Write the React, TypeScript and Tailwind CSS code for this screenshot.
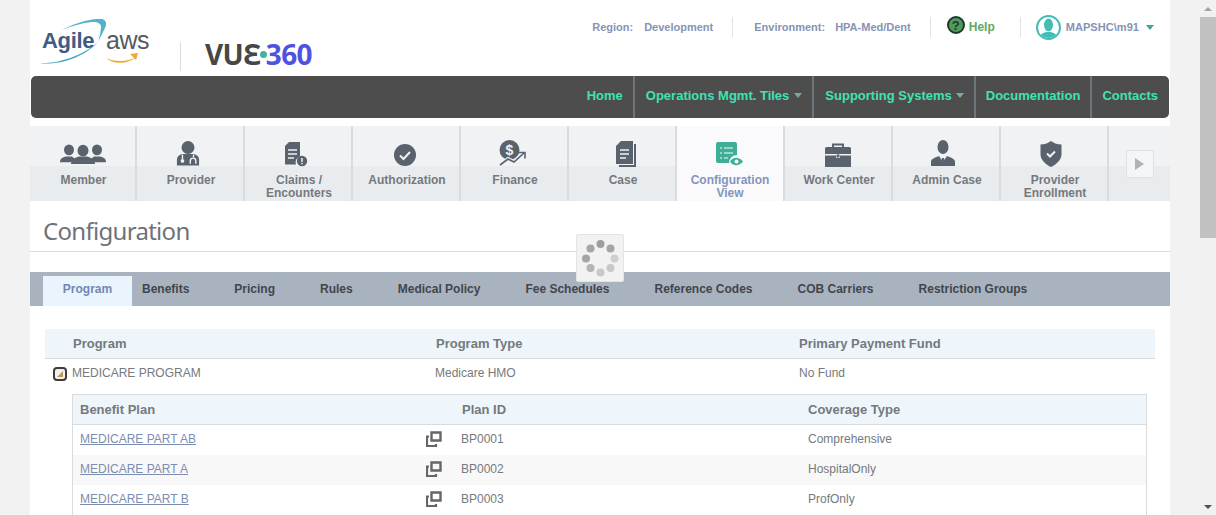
import type { ReactNode } from "react";

const gray = "#59626d";

const tiles: { label: string[]; icon: ReactNode; active?: boolean }[] = [
  {
    label: ["Member"],
    icon: (
      <svg className="mb-[3px] ml-[1px]" width="46" height="20" viewBox="0 0 46 24" preserveAspectRatio="none" fill={gray}>
        <ellipse cx="9" cy="7" rx="5" ry="6.5" />
        <path d="M0 22c0-5 3-6 6-7h6l3 3-4 4z" />
        <ellipse cx="37" cy="7" rx="5" ry="6.5" />
        <path d="M46 22c0-5-3-6-6-7h-6l-3 3 4 4z" />
        <ellipse cx="23" cy="8" rx="5.5" ry="7" />
        <path d="M11 24c0-5 4-8 8-9h8c4 1 8 4 8 9z" />
      </svg>
    ),
  },
  {
    label: ["Provider"],
    icon: (
      <svg className="mr-[4px]" width="24" height="27" viewBox="0 0 26 28" fill={gray}>
        <circle cx="13" cy="7.5" r="7" />
        <path d="M1 27v-6c0-4 3-6 6-6.5h12c3 .5 6 2.5 6 6.5v6z" />
        <path d="M7 15v5M19 15v3" stroke="#f0f2f4" strokeWidth="1.5" fill="none" />
        <circle cx="7" cy="22" r="2" fill="#f0f2f4" />
        <path d="M15.5 25v-3a3 3 0 0 1 6 0v3" stroke="#f0f2f4" strokeWidth="1.5" fill="none" />
      </svg>
    ),
  },
  {
    label: ["Claims /", "Encounters"],
    icon: (
      <svg className="mr-[4px]" width="24" height="26" viewBox="0 0 24 26" fill={gray}>
        <path d="M5 1h11v14.5a6 6 0 0 0-4 8H1V5z" />
        <path d="M4 9h9M4 13h9M4 17h6" stroke="#f0f2f4" strokeWidth="1.4" />
        <circle cx="18" cy="20" r="5.2" />
        <path d="M18 17v4M18 22v1.3" stroke="#f0f2f4" strokeWidth="1.5" />
      </svg>
    ),
  },
  {
    label: ["Authorization"],
    icon: (
      <svg className="mr-[2px] mb-[1px]" width="22" height="22" viewBox="0 0 22 22">
        <circle cx="11" cy="11" r="11" fill={gray} />
        <path d="M6 11.5l3.5 3.5L16 8" stroke="#f0f2f4" strokeWidth="2" fill="none" />
      </svg>
    ),
  },
  {
    label: ["Finance"],
    icon: (
      <svg className="mr-[2px]" width="28" height="27" viewBox="0 0 28 27" fill="none">
        <circle cx="10.500" cy="10" r="10" fill={gray} />
        <text x="10.500" y="15" textAnchor="middle" fontSize="14" fontWeight="700" fill="#f0f2f4" fontFamily="Liberation Sans">$</text>
        <path d="M1 25l8-6 6 3 10-9" stroke="#f0f2f4" strokeWidth="4" />
        <path d="M1 25l8-6 6 3 10-9" stroke={gray} strokeWidth="1.600" />
        <path d="M19 12.500h7v6" stroke={gray} strokeWidth="1.600" />
      </svg>
    ),
  },
  {
    label: ["Case"],
    icon: (
      <svg className="ml-[8px]" width="20" height="26" viewBox="0 0 20 26" fill={gray}>
        <path d="M5 0h12v23H0V5zM4 1v3H1z" />
        <path d="M18 3h2v23H3v-2h15z" />
        <path d="M4 9h9M4 13h9M4 17h6" stroke="#f0f2f4" strokeWidth="1.4" />
      </svg>
    ),
  },
  {
    label: ["Configuration", "View"],
    active: true,
    icon: (
      <svg width="28" height="26" viewBox="0 0 28 26" fill="#3fae97">
        <path d="M2 1h17a2 2 0 0 1 2 2v11a8 8 0 0 0-8 8H2a2 2 0 0 1-2-2V3a2 2 0 0 1 2-2z" />
        <path d="M4 7h2M8 7h9M4 12h2M8 12h9M4 17h2M8 17h4" stroke="#fbfbfe" strokeWidth="1.2" />
        <path d="M14 20.5c3-5 9-5 13 0-4 5-10 5-13 0z" />
        <circle cx="20.5" cy="20.5" r="2" fill="#fbfbfe" />
      </svg>
    ),
  },
  {
    label: ["Work Center"],
    icon: (
      <svg width="26" height="24" viewBox="0 0 26 24" fill={gray}>
        <path d="M8 5V1.500h10V5" stroke={gray} strokeWidth="2" fill="none" />
        <path d="M1.500 4h23A1.500 1.500 0 0 1 26 5.500V11H0V5.500A1.500 1.500 0 0 1 1.500 4z" />
        <path d="M0 12.500h11V15h4v-2.500h11V24H0z" />
        <path d="M11.500 11.500h3v3h-3z" />
      </svg>
    ),
  },
  {
    label: ["Admin Case"],
    icon: (
      <svg className="mr-[6px]" width="24" height="27" viewBox="0 0 24 27" fill={gray}>
        <ellipse cx="12" cy="7" rx="5.500" ry="7" />
        <path d="M0 26v-4c0-3 3-4 8-6l4 6 4-6c5 2 8 3 8 6v4z" />
        <path d="M11 18h2l.5 2-1.500 3-1.500-3z" />
      </svg>
    ),
  },
  {
    label: ["Provider", "Enrollment"],
    icon: (
      <svg className="mr-[6px]" width="22" height="26" viewBox="0 0 22 26" fill={gray}>
        <path d="M11 0c3 2.500 7 3.500 10.500 3.500V13c0 6-5 10.500-10.500 13C5.500 23.500.5 19 .5 13V3.500C4 3.500 8 2.500 11 0z" />
        <path d="M7 12.500l3 3 5-5" stroke="#f0f2f4" strokeWidth="2" fill="none" />
      </svg>
    ),
  },
];

const tabs = ["Benefits", "Pricing", "Rules", "Medical Policy", "Fee Schedules", "Reference Codes", "COB Carriers", "Restriction Groups"];

const plans = [
  { name: "MEDICARE PART AB", id: "BP0001", coverage: "Comprehensive" },
  { name: "MEDICARE PART A", id: "BP0002", coverage: "HospitalOnly" },
  { name: "MEDICARE PART B", id: "BP0003", coverage: "ProfOnly" },
];

function Caret({ className }: { className: string }) {
  return <span className={`inline-block h-0 w-0 border-x-[4px] border-t-[5px] border-x-transparent ${className}`} />;
}

function Logo() {
  return (
    <div className="flex h-[76px] w-[300px] items-start pl-[11px]">
      <div className="relative mt-[19px] h-[46px] w-[115px]">
        <svg className="absolute left-0 top-0" width="115" height="46" viewBox="0 0 115 46" fill="none">
          <path d="M21 11C33 4 52-1 61 0c5 1 5 6 2 11-2 4-4 8-6 12 2-6 3-13 3-15 0-3-2-5-9-5-10 1-21 4-30 8z" fill="#4fb3c9" />
          <path d="M-1 44c14 1 40-5 58-21-12 14-38 24-58 21z" fill="#3fa7c4" />
          <path d="M65 39c8 4 22 4 30-1-7 7-23 8-30 1z" fill="#f0a830" />
          <path d="M89 35l8-1-2 7z" fill="#f0a830" />
        </svg>
        <span className="absolute left-[1px] top-[9px] font-['Liberation_Sans'] text-[22px] leading-[26px] font-bold tracking-[-0.3px] text-[#3f5c85]">Agile</span>
        <span className="absolute left-[65px] top-[7px] font-['Liberation_Sans'] text-[25px] leading-[28px] tracking-[-0.5px] text-[#555a60]">aws</span>
      </div>
      <div className="mt-[42px] ml-[24px] h-[29px] w-px bg-[#dcdcdc]" />
      <div className="mt-[36px] ml-[24px] flex h-[36px] items-center font-['Noto_Sans'] text-[28px] font-bold tracking-[-0.6px] whitespace-nowrap">
        <span className="text-[#474747]">VUƐ</span>
        <span className="mx-[-1px] h-[7px] w-[7px] rounded-full bg-[#3fb5a0]" />
        <span className="text-[#4f52e0]">360</span>
      </div>
    </div>
  );
}

function TopInfo() {
  return (
    <div className="flex items-start pt-[17px] pr-[16px] font-['Liberation_Sans'] text-[11px] font-bold text-[#8594b4]">
      <div className="flex h-[20px] items-center border-r border-[#e2e2e2] pr-[19px]">
        <span>Region:</span>
        <span className="ml-[11px]">Development</span>
      </div>
      <div className="ml-[21px] flex h-[20px] items-center border-r border-[#e2e2e2] pr-[19px]">
        <span>Environment:</span>
        <span className="ml-[10px]">HPA-Med/Dent</span>
      </div>
      <div className="ml-[16px] flex h-[20px] items-center border-r border-[#e2e2e2] pr-[25px]">
        <span className="flex h-[18px] w-[18px] -translate-y-[2px] items-center justify-center rounded-full border-2 border-[#1f3a2c] bg-[#4f9a5c] text-[13px] leading-none text-[#1f3a2c]">?</span>
        <span className="ml-[4px] text-[12px] text-[#5fa85f]">Help</span>
      </div>
      <div className="ml-[15px] flex h-[20px] items-center">
        <span className="flex h-[25px] w-[25px] shrink-0 items-end justify-center overflow-hidden rounded-full border-2 border-[#45bcb4]">
          <svg width="17" height="20" viewBox="0 0 17 20" fill="#45bcb4">
            <ellipse cx="8.500" cy="7" rx="4.500" ry="6.500" />
            <path d="M0 20c0-4 3-5 6-6h5c3 1 6 2 6 6z" />
          </svg>
        </span>
        <span className="ml-[5px] tracking-[0.05px]">MAPSHC\m91</span>
        <Caret className="ml-[7px] border-t-[#45a592]" />
      </div>
    </div>
  );
}

function NavBar() {
  return (
    <div className="mx-px flex h-[42px] justify-end rounded-[5px] bg-[#4d4d4d] font-['Liberation_Sans'] text-[13px] font-bold text-[#3fe3b3]">
      <div className="flex items-center border-r-2 border-[#6c757b] pr-[10px] pb-[3px] pl-[11px]">Home</div>
      <div className="flex items-center border-r-2 border-[#6c757b] pr-[10px] pb-[3px] pl-[11px]">
        Operations Mgmt. Tiles
        <Caret className="ml-[5px] border-t-[#7fa6a0]" />
      </div>
      <div className="flex items-center border-r-2 border-[#6c757b] pr-[10px] pb-[3px] pl-[11px]">
        Supporting Systems
        <Caret className="ml-[4px] border-t-[#7fa6a0]" />
      </div>
      <div className="flex items-center border-r-2 border-[#6c757b] pr-[10px] pb-[3px] pl-[10px]">Documentation</div>
      <div className="flex items-center pr-[11px] pb-[3px] pl-[10px]">Contacts</div>
    </div>
  );
}

function TileRow() {
  return (
    <div className="mt-[8px] flex h-[75px] bg-[linear-gradient(#f0f2f4_40px,#e9ecee_40px)] font-['Liberation_Sans'] text-[12px] leading-[13px]">
      {tiles.map((tile, i) => (
        <div
          key={tile.label[0] + tile.label.length}
          className={`flex h-full shrink-0 flex-col items-center border-r-2 border-[#d9dbdc] text-center font-bold ${
            i === 0 ? "w-[107px]" : "w-[108px]"
          } ${tile.active ? "bg-[#fafafd] text-[#8494bb]" : "text-[#75797e]"}`}
        >
          <div className="flex h-[41px] items-end justify-center">{tile.icon}</div>
          <div className={`mt-[7px] ${tile.active ? "" : "pl-[2px]"}`}>
            {tile.label.map((line) => (
              <div key={line}>{line}</div>
            ))}
          </div>
        </div>
      ))}
      <div className="flex flex-1 items-center justify-center">
        <div className="flex h-[28px] w-[28px] items-center justify-center border border-[#dfe1e3] bg-[#f4f5f6]">
          <span className="h-0 w-0 border-y-[6px] border-l-[9px] border-y-transparent border-l-[#b0b2b4]" />
        </div>
      </div>
    </div>
  );
}

function CopyIcon() {
  return (
    <svg width="16" height="16" viewBox="0 0 16 16" fill="none" stroke="#666">
      <path d="M5.500 1.500h9v8h-9z" strokeWidth="2.400" />
      <path d="M3 5.500H1v9.500h9v-2" strokeWidth="2.200" />
    </svg>
  );
}

export default function App() {
  return (
    <div className="flex h-[515px] w-[1216px] overflow-hidden bg-[#f2f2f2]">
      <div className="relative ml-[30px] w-[1140px] shrink-0 bg-white">
        <div className="flex h-[76px] justify-between">
          <Logo />
          <TopInfo />
        </div>
        <NavBar />
        <TileRow />

        {/* Page heading */}
        <div className="h-[51px] border-b border-[#dedede] pt-[14px] pl-[13px] font-['Noto_Sans'] text-[24px] leading-[32px] tracking-[-0.7px] text-[#6f7276]">
          Configuration
        </div>

        {/* Tabs */}
        <div className="mt-[20px] flex h-[34px] items-end bg-[#a9b2bf] pl-[13px] font-['Liberation_Sans'] text-[12px] font-bold text-[#41464c]">
          <div className="flex h-[30px] w-[89px] items-center justify-center bg-[#eaf4fc] pb-[4px] text-[#7287b4]">Program</div>
          <div className="ml-[10px] flex gap-[45px]">
            {tabs.map((tab) => (
              <div key={tab} className="flex h-[30px] items-center pb-[4px] whitespace-nowrap">
                {tab}
              </div>
            ))}
          </div>
        </div>

        {/* Program table */}
        <div className="mx-[15px] mt-[23px] font-['Liberation_Sans'] text-[12px] text-[#76797d]">
          <div className="flex h-[30px] items-center border-b border-[#d5d9dc] bg-[#eef6fc] text-[13px] font-bold text-[#75797d]">
            <div className="w-[391px] pl-[28px]">Program</div>
            <div className="w-[363px]">Program Type</div>
            <div>Primary Payment Fund</div>
          </div>
          <div className="flex h-[30px] items-center pb-[3px]">
            <div className="flex w-[390px] items-center pl-[8px]">
              <span className="flex h-[14px] w-[14px] translate-y-[1px] items-center justify-center rounded-[4px] border-2 border-[#3c3c3c] bg-[#f4f1e8]">
                <span className="h-0 w-0 border-b-[6px] border-l-[6px] border-b-[#b59a5a] border-l-transparent" />
              </span>
              <span className="ml-[5px]">MEDICARE PROGRAM</span>
            </div>
            <div className="w-[364px]">Medicare HMO</div>
            <div>No Fund</div>
          </div>

          {/* Benefit plans */}
          <div className="mt-[5px] ml-[27px] mr-[8px] border border-[#d9dcdf]">
            <div className="flex h-[30px] items-center border-b border-[#d9dcdf] bg-[#eef6fc] text-[13px] font-bold text-[#75797d]">
              <div className="w-[389px] pl-[7px]">Benefit Plan</div>
              <div className="w-[346px]">Plan ID</div>
              <div>Coverage Type</div>
            </div>
            {plans.map((plan, i) => (
              <div key={plan.id} className={`flex h-[30px] items-center pb-[2px] ${i === 1 ? "bg-[#f8f8f8]" : ""}`}>
                <div className="flex w-[388px] items-center justify-between pr-[19px] pl-[7px]">
                  <span className="text-[#7c8db2] underline">{plan.name}</span>
                  <CopyIcon />
                </div>
                <div className="w-[347px]">{plan.id}</div>
                <div>{plan.coverage}</div>
              </div>
            ))}
          </div>
        </div>

        {/* Loading spinner overlay */}
        <div className="absolute left-[546px] top-[234px] h-[48px] w-[48px] rounded-[2px] border border-[#e4e4e4] bg-[#f2f2f2]">
          <svg width="46" height="46" viewBox="0 0 46 46">
            <circle cx="23.500" cy="9" r="4" fill="#a09c9c" />
            <circle cx="33.500" cy="13.500" r="4" fill="#a8a4a4" />
            <circle cx="37.500" cy="23.500" r="4" fill="#d0cece" />
            <circle cx="33.500" cy="33" r="4" fill="#c8c8c8" />
            <circle cx="23.500" cy="37.500" r="4" fill="#c8c8c8" />
            <circle cx="13.500" cy="33" r="4" fill="#b8b4b4" />
            <circle cx="9" cy="23.500" r="4" fill="#a8a4a4" />
            <circle cx="13.500" cy="13.500" r="4" fill="#a8a4a4" />
          </svg>
        </div>
      </div>

      {/* Browser scrollbar */}
      <div className="ml-[30px] flex w-[16px] shrink-0 flex-col items-center bg-[#f1f1f1]">
        <div className="flex h-[17px] items-center">
          <span className="h-0 w-0 border-x-[4px] border-b-[4px] border-x-transparent border-b-[#a3a3a3]" />
        </div>
        <div className="h-[221px] w-full bg-[#c1c1c1]" />
        <div className="flex-1" />
        <div className="flex h-[17px] items-center">
          <span className="h-0 w-0 border-x-[4px] border-t-[4px] border-x-transparent border-t-[#505050]" />
        </div>
      </div>
    </div>
  );
}
